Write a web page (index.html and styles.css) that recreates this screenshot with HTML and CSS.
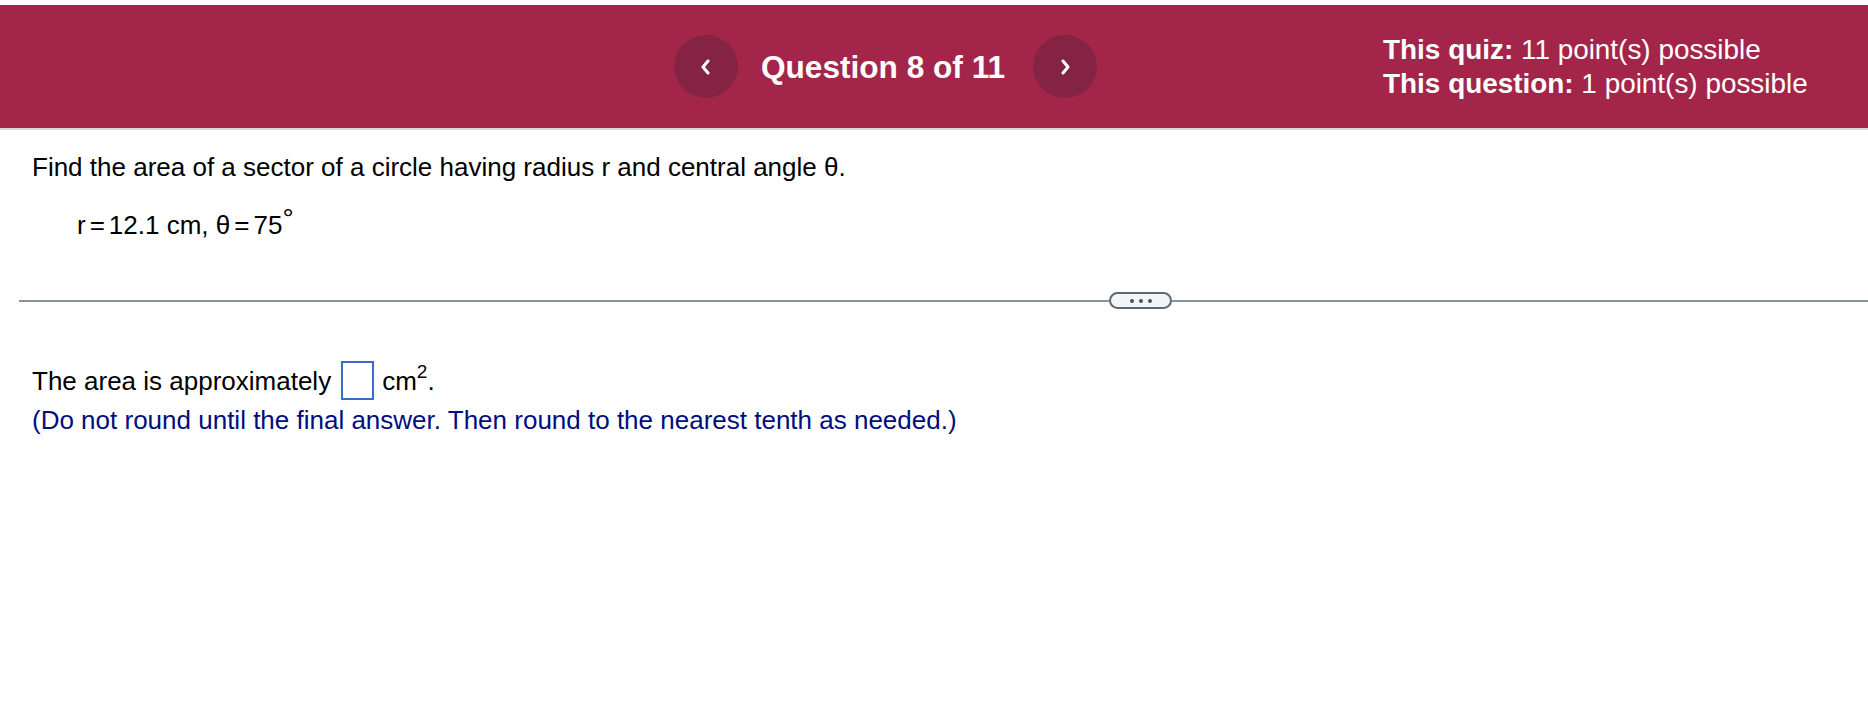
FILE: index.html
```html
<!DOCTYPE html>
<html>
<head>
<meta charset="utf-8">
<link rel="stylesheet" href="styles.css">
</head>
<body>
<header class="topbar">
  <nav class="qnav">
    <button class="navbtn" aria-label="Previous">
      <svg width="12" height="16" viewBox="0 0 12 16"><polyline points="8,2 3,8 8,14" fill="none" stroke="#fff" stroke-width="3" stroke-linecap="round" stroke-linejoin="round"/></svg>
    </button>
    <h1 class="qtitle">Question 8 of 11</h1>
    <button class="navbtn" aria-label="Next">
      <svg width="12" height="16" viewBox="0 0 12 16"><polyline points="4,2 9,8 4,14" fill="none" stroke="#fff" stroke-width="3" stroke-linecap="round" stroke-linejoin="round"/></svg>
    </button>
  </nav>
  <div class="points">
    <div><b>This quiz:</b> 11 point(s) possible</div>
    <div><b>This question:</b> 1 point(s) possible</div>
  </div>
</header>
<main class="content">
  <p class="question">Find the area of a sector of a circle having radius r and central angle θ.</p>
  <p class="given">r<span class="op">=</span>12.1 cm, θ<span class="op">=</span>75<span class="deg">°</span></p>
</main>
<div class="divider">
  <div class="rule rule-left"></div>
  <div class="pill"><span class="dot"></span><span class="dot"></span><span class="dot"></span></div>
  <div class="rule rule-right"></div>
</div>
<section class="answer">
  <div class="answer-row">
    <span>The area is approximately</span>
    <span class="box"></span>
    <span>cm<sup class="sup">2</sup>.</span>
  </div>
  <p class="hint">(Do not round until the final answer. Then round to the nearest tenth as needed.)</p>
</section>
</body>
</html>
```
FILE: styles.css
```css
* { box-sizing: border-box; }
html, body { margin: 0; padding: 0; background: #fff; }
body {
  font-family: "Liberation Sans", Arial, Helvetica, sans-serif;
  color: #000;
  padding-top: 5px;
}
.topbar {
  height: 125px;
  background: #a3264a;
  border-bottom: 2px solid #d3d6df;
  display: flex;
  align-items: center;
  color: #fff;
}
.qnav {
  display: flex;
  align-items: center;
  margin-left: 674px;
}
.navbtn {
  width: 64px;
  height: 63px;
  border-radius: 50%;
  border: none;
  background: #842343;
  display: flex;
  align-items: center;
  justify-content: center;
  padding: 0;
  margin: 0;
}
.qtitle {
  margin: 0 28px 0 23px;
  font-size: 31.6px;
  font-weight: bold;
  line-height: 40px;
  color: #fff;
}
.points {
  margin-left: 286px;
  font-size: 27.9px;
  line-height: 34px;
  margin-top: 0;
}
.points b { font-weight: bold; }
.content { padding-left: 32px; }
.question {
  margin: 22px 0 0 0;
  font-size: 26px;
  line-height: 30px;
}
.given {
  margin: 28px 0 0 45px;
  font-size: 26px;
  line-height: 30px;
}
.op { margin: 0 4px; }
.deg { position: relative; top: -6px; font-size: 28px; }
.divider {
  display: flex;
  align-items: center;
  margin-top: 52px;
  height: 17px;
}
.rule { height: 2px; background: #8a929e; }
.rule-left { width: 1090px; margin-left: 19px; }
.rule-right { flex: 1; }
.pill {
  width: 63px;
  height: 17px;
  border: 2px solid #5d6775;
  border-radius: 9px;
  background: #f3f4f6;
  display: flex;
  align-items: center;
  justify-content: center;
  gap: 5px;
}
.dot { width: 4px; height: 4px; border-radius: 50%; background: #4a5260; }
.answer {
  padding-left: 32px;
  margin-top: 52px;
}
.answer-row {
  display: flex;
  align-items: center;
  height: 39px;
  font-size: 26px;
  line-height: 30px;
}
.box {
  width: 33px;
  height: 39px;
  border: 2px solid #3a6cc9;
  margin: 0 8px 0 10px;
}
.sup { font-size: 19px; position: relative; top: -2px; vertical-align: super; line-height: 0; }
.hint {
  margin: 5px 0 0 0;
  font-size: 26px;
  line-height: 30px;
  color: #000d80;
}
```
